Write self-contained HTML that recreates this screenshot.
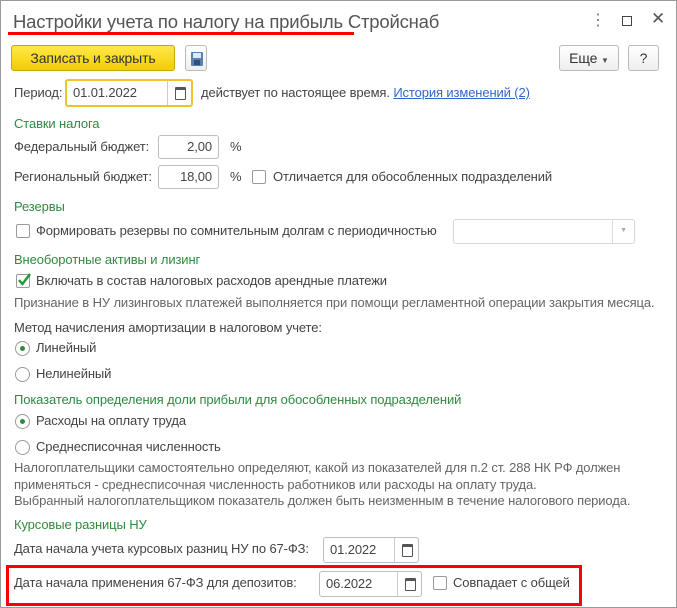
<!DOCTYPE html><html><head><meta charset="utf-8"><style>
*{box-sizing:border-box;margin:0;padding:0}
body{width:677px;height:608px;background:#fff;font-family:"Liberation Sans",Arial,sans-serif;font-size:13px;letter-spacing:-0.12px;color:#444;position:relative;overflow:hidden;border:1px solid #9a9a9a}
.a{position:absolute;white-space:nowrap;line-height:16px}
.g{color:#2e8b3e}
.h{color:#666}
.f{position:absolute;border:1px solid #bdbdbd;border-radius:3px;background:#fff;line-height:22px;padding:0 6px}
.cb{position:absolute;width:14px;height:14px;border:1px solid #9a9a9a;border-radius:2px;background:#fff}
.rb{position:absolute;width:15px;height:15px;border:1px solid #9a9a9a;border-radius:50%;background:#fff}
.rb.on::after{content:"";position:absolute;left:4px;top:4px;width:5px;height:5px;border-radius:50%;background:#2e8b3e}
.cal{position:absolute;top:0;bottom:0;right:0;width:24px;border-left:1px solid #ccc}
.cal::before{content:"";position:absolute;left:7px;top:6px;width:9px;height:9px;border:1px solid #555;border-top-width:3px;border-radius:1px}
.btn{position:absolute;border:1px solid #bbb;border-radius:3px;background:linear-gradient(#fff,#eee);text-align:center;line-height:24px;font-size:14px;color:#333}
</style></head><body>
<div class="a" style="left:12px;top:10px;font-size:18.5px;letter-spacing:-0.2px;line-height:22px;color:#555">Настройки учета по налогу на прибыль Стройснаб</div>
<div style="position:absolute;left:7px;top:31px;width:346px;height:3px;background:#f00"></div>
<div class="a" style="left:589px;top:12px;color:#777;font-size:16px">⋮</div>
<div style="position:absolute;left:621px;top:15px;width:10px;height:10px;border:1.5px solid #444"></div>
<div class="a" style="left:650px;top:10px;font-size:17px;color:#555">✕</div>

<div class="btn" style="left:10px;top:44px;width:164px;height:26px;background:linear-gradient(#ffe84a,#f4cd00);border-color:#c9a800;color:#333">Записать и закрыть</div>
<div class="btn" style="left:184px;top:44px;width:22px;height:26px"><div style="position:absolute;left:5px;top:6px;width:12px;height:14px;background:#5a7fb0;border-radius:1px"><div style="position:absolute;left:2px;top:1px;width:8px;height:5px;background:#dfe8f3"></div><div style="position:absolute;left:3px;top:8px;width:6px;height:5px;background:#2f4f7a"></div></div></div>
<div class="btn" style="left:558px;top:44px;width:60px;height:26px">Еще <span style="font-size:8px;color:#555">▼</span></div>
<div class="btn" style="left:627px;top:44px;width:31px;height:26px">?</div>

<div class="a" style="left:13px;top:84px">Период:</div>
<div class="f" style="left:64px;top:78px;width:128px;height:28px;border:2px solid #f2c12e;line-height:24px">01.01.2022<div class="cal"></div></div>
<div class="a" style="left:200px;top:84px">действует по настоящее время. <span style="color:#3366cc;text-decoration:underline">История изменений (2)</span></div>

<div class="a g" style="left:13px;top:115px">Ставки налога</div>
<div class="a" style="left:13px;top:138px">Федеральный бюджет:</div>
<div class="f" style="left:157px;top:134px;width:61px;height:24px;text-align:right">2,00</div>
<div class="a" style="left:229px;top:138px">%</div>
<div class="a" style="left:13px;top:168px">Региональный бюджет:</div>
<div class="f" style="left:157px;top:164px;width:61px;height:24px;text-align:right">18,00</div>
<div class="a" style="left:229px;top:168px">%</div>
<div class="cb" style="left:251px;top:169px"></div>
<div class="a" style="left:272px;top:168px">Отличается для обособленных подразделений</div>

<div class="a g" style="left:13px;top:198px">Резервы</div>
<div class="cb" style="left:15px;top:223px"></div>
<div class="a" style="left:35px;top:222px">Формировать резервы по сомнительным долгам с периодичностью</div>
<div class="f" style="left:452px;top:218px;width:182px;height:25px;border-color:#d8d8d8"><div style="position:absolute;right:0;top:0;bottom:0;width:22px;border-left:1px solid #ddd;font-size:7px;color:#aaa;text-align:center">▼</div></div>

<div class="a g" style="left:13px;top:251px">Внеоборотные активы и лизинг</div>
<div class="cb" style="left:15px;top:273px"><svg width="14" height="14" style="position:absolute;left:0;top:-2px"><path d="M2 7 L5.5 11 L13 1" stroke="#1e9a3a" stroke-width="2.4" fill="none"/></svg></div>
<div class="a" style="left:35px;top:272px">Включать в состав налоговых расходов арендные платежи</div>
<div class="a h" style="left:13px;top:294px">Признание в НУ лизинговых платежей выполняется при помощи регламентной операции закрытия месяца.</div>
<div class="a" style="left:13px;top:319px">Метод начисления амортизации в налоговом учете:</div>
<div class="rb on" style="left:14px;top:340px"></div>
<div class="a" style="left:35px;top:339px">Линейный</div>
<div class="rb" style="left:14px;top:366px"></div>
<div class="a" style="left:35px;top:365px">Нелинейный</div>

<div class="a g" style="left:13px;top:391px">Показатель определения доли прибыли для обособленных подразделений</div>
<div class="rb on" style="left:14px;top:413px"></div>
<div class="a" style="left:35px;top:412px">Расходы на оплату труда</div>
<div class="rb" style="left:14px;top:439px"></div>
<div class="a" style="left:35px;top:438px">Среднесписочная численность</div>
<div class="a h" style="left:13px;top:459px">Налогоплательщики самостоятельно определяют, какой из показателей для п.2 ст. 288 НК РФ должен</div>
<div class="a h" style="left:13px;top:476px">применяться - среднесписочная численность работников или расходы на оплату труда.</div>
<div class="a h" style="left:13px;top:492px">Выбранный налогоплательщиком показатель должен быть неизменным в течение налогового периода.</div>

<div class="a g" style="left:13px;top:516px">Курсовые разницы НУ</div>
<div class="a" style="left:13px;top:540px">Дата начала учета курсовых разниц НУ по 67-ФЗ:</div>
<div class="f" style="left:322px;top:536px;width:96px;height:26px;line-height:24px">01.2022<div class="cal"></div></div>
<div style="position:absolute;left:5px;top:564px;width:576px;height:41px;border:3px solid #f00"></div>
<div class="a" style="left:13px;top:574px">Дата начала применения 67-ФЗ для депозитов:</div>
<div class="f" style="left:318px;top:570px;width:103px;height:26px;line-height:24px">06.2022<div class="cal"></div></div>
<div class="cb" style="left:432px;top:575px"></div>
<div class="a" style="left:452px;top:574px">Совпадает с общей</div>
</body></html>
